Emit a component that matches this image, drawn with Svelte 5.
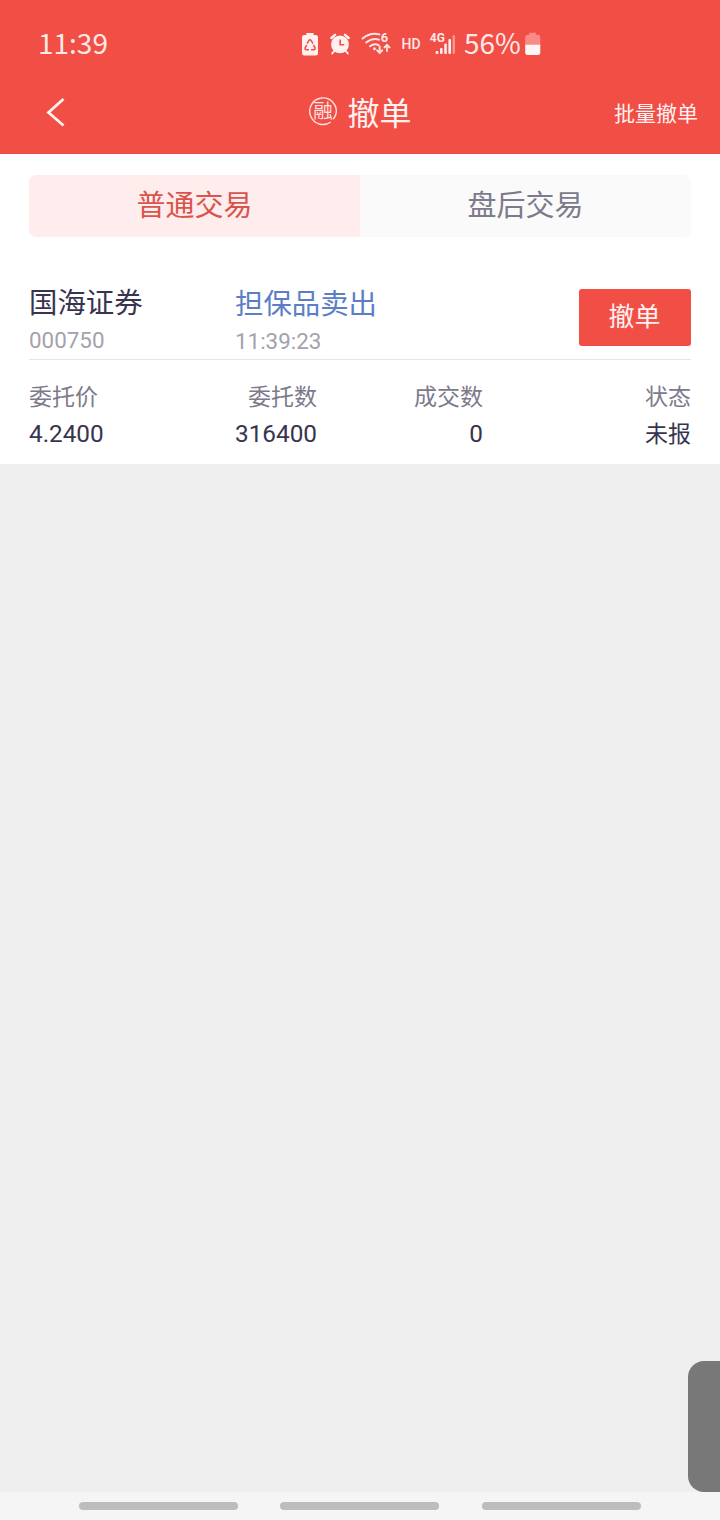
<script>
	const tabs = ['普通交易', '盘后交易'];
	let activeTab = 0;

	const order = {
		name: '国海证券',
		code: '000750',
		side: '担保品卖出',
		time: '11:39:23'
	};

	const fields = [
		{ label: '委托价', value: '4.2400' },
		{ label: '委托数', value: '316400' },
		{ label: '成交数', value: '0' },
		{ label: '状态', value: '未报' }
	];
</script>

<div class="screen">
	<header>
		<div class="status">
			<span class="clock">11:39</span>
			<svg class="status-icons" width="156" height="30" viewBox="300 29 156 30">
				<!-- battery saver -->
				<path d="M306.500 33h7v2h2.300a2.200 2.200 0 0 1 2.200 2.200v16a2.200 2.200 0 0 1-2.200 2.200h-11.600a2.200 2.200 0 0 1-2.200-2.200v-16a2.200 2.200 0 0 1 2.200-2.200h2.300z" fill="#fff1f0" />
				<g fill="none" stroke="#f14e46" stroke-width="1.5" stroke-linejoin="round">
					<path d="M307 43.600l2-3.300q1-1.200 2 0l2 3.300" />
					<path d="M313.400 45l1.600 2.700q.4 1.800-1 2h-3" />
					<path d="M309 49.700h-3q-1.500-.4-.8-2l1.500-2.600" />
				</g>
				<!-- alarm -->
				<g fill="none" stroke="#fff1f0" stroke-linecap="round">
					<circle cx="340" cy="44.400" r="8.900" fill="#fff1f0" stroke="none" />
					<path d="M331.300 38l3.700-3.200M348.700 38l-3.700-3.200" stroke-width="2.4" />
					<path d="M334.200 51l-2 2.500M345.800 51l2 2.500" stroke-width="2" />
					<path d="M340.200 39.500v5.300h4" stroke="#f14e46" stroke-width="1.6" stroke-linecap="butt" />
				</g>
				<!-- wifi 6 -->
				<g fill="none" stroke="#ffe5e3" stroke-width="2" stroke-linecap="round">
					<path d="M362.600 38.600q7.700-6.600 16.800-4.200" />
					<path d="M366.200 42.600q6-5.200 12.800-3" />
					<path d="M370 46.300q4.200-3.400 8.600-1.100" />
					<circle cx="374.400" cy="48.800" r="1.500" fill="#ffe5e3" stroke="none" />
					<path d="M379.700 46.500v6M377.100 50.300l2.600 2.600 2.600-2.600M387 51v-5.800M384.400 47.400l2.600-2.600 2.600 2.600" stroke-width="1.9" />
				</g>
				<text x="380.800" y="42" font-size="13" font-weight="700">6</text>
				<text x="401.600" y="48.700" font-size="14" font-weight="500" textLength="19" lengthAdjust="spacingAndGlyphs">HD</text>
				<text x="429.800" y="41.500" font-size="12" font-weight="700" textLength="15" lengthAdjust="spacingAndGlyphs">4G</text>
				<g fill="#fff1f0">
					<rect x="435.600" y="51" width="2.800" height="3" rx="1" />
					<rect x="440" y="48" width="2.600" height="6" rx="1" />
					<rect x="444.200" y="43.500" width="2.600" height="10.500" rx="1" />
					<rect x="448.400" y="39" width="2.600" height="15" rx="1" />
					<rect x="452.600" y="35" width="2.400" height="19" rx="1" opacity=".45" />
				</g>
			</svg>
			<span class="percent">56%</span>
			<svg class="battery" width="16" height="24" viewBox="0 0 16 24">
				<path d="M4.300.8h6.600v2h2a2.400 2.400 0 0 1 2.400 2.400V13H.2V5.200A2.400 2.400 0 0 1 2.500 2.800h1.800z" fill="#f98b86" />
				<path d="M.2 12.700h15.100v8a2.400 2.400 0 0 1-2.400 2.400H2.600a2.400 2.400 0 0 1-2.400-2.400z" fill="#fff5f4" />
			</svg>
		</div>
		<nav>
			<svg class="back" width="20" height="32" viewBox="0 0 20 32">
				<path d="M17.500 3L2.500 16.500l15 13" />
			</svg>
			<h1>
				<svg width="30" height="30" viewBox="0 0 30 30">
					<path d="M22.800 26A13.300 13.300 0 1 1 28.200 17q-.8 3.700-3 6.300" />
					<text x="15" y="21.600" font-size="19.500" text-anchor="middle">融</text>
				</svg>
				撤单
			</h1>
			<span class="batch">批量撤单</span>
		</nav>
	</header>

	<main>
		<div class="tabs">
			{#each tabs as tab, i}
				<button class:active={activeTab === i} on:click={() => (activeTab = i)}>{tab}</button>
			{/each}
		</div>

		<div class="order">
			<div class="stock">
				<div class="name">{order.name}</div>
				<div class="sub">{order.code}</div>
			</div>
			<div class="deal">
				<div class="name">{order.side}</div>
				<div class="sub">{order.time}</div>
			</div>
			<button class="cancel">撤单</button>
		</div>

		<div class="fields">
			{#each fields as field}
				<div class="field">
					<div class="label">{field.label}</div>
					<div class="value">{field.value}</div>
				</div>
			{/each}
		</div>
	</main>

	<div class="drawer"></div>
	<footer>
		<i></i>
		<i></i>
		<i></i>
	</footer>
</div>

<style>
	.screen {
		position: relative;
		display: flex;
		flex-direction: column;
		width: 720px;
		height: 1520px;
		overflow: hidden;
		background: #efefef;
		font-family: Roboto, 'Noto Sans CJK SC', sans-serif;
	}
	button {
		border: none;
		padding: 0;
		font-family: inherit;
	}
	header {
		height: 154px;
		background: #f14e46;
		color: #fff1f0;
		font-family: 'Noto Sans CJK SC', sans-serif;
	}
	.status {
		display: flex;
		align-items: center;
		height: 58px;
		padding: 30px 0 0 38px;
		box-sizing: border-box;
		font-size: 28px;
		line-height: 30px;
		color: #ffe9e7;
	}
	.clock {
		width: 262px;
		padding-bottom: 4px;
	}
	.status-icons {
		flex: none;
	}
	.status-icons text {
		fill: #ffe9e7;
		font-family: Roboto, sans-serif;
	}
	.percent {
		width: 61px;
		padding: 0 0 4px 8px;
	}
	nav {
		display: grid;
		grid-template-columns: 1fr auto 1fr;
		align-items: center;
		height: 96px;
		padding: 12px 22px 0 46px;
		box-sizing: border-box;
	}
	.back {
		fill: none;
		stroke: #fff1f0;
		stroke-width: 2.8;
	}
	h1 {
		display: flex;
		align-items: center;
		gap: 9px;
		margin: -2px 0 0 -24px;
		font-size: 32px;
		font-weight: 400;
		line-height: 40px;
	}
	h1 path {
		fill: none;
		stroke: #ffe3e1;
		stroke-width: 1.4;
	}
	h1 text {
		fill: #ffe3e1;
	}
	.batch {
		text-align: right;
		font-size: 21px;
	}
	main {
		height: 310px;
		padding: 21px 29px 0;
		box-sizing: border-box;
		background: #fff;
	}
	.tabs {
		display: flex;
		height: 62px;
		border-radius: 7px;
		overflow: hidden;
	}
	.tabs button {
		flex: 1;
		padding-top: 1px;
		background: #fafafa;
		color: #7d7a8c;
		font-size: 29px;
		line-height: 61px;
	}
	.tabs button.active {
		background: #ffecec;
		color: #d9544d;
	}
	.order {
		display: grid;
		grid-template-columns: 206px 1fr 112px;
		height: 123px;
		padding-top: 47px;
		box-sizing: border-box;
		border-bottom: 1px solid #e6e6e6;
	}
	.name {
		padding-top: 2px;
		font-size: 28.4px;
		line-height: 36px;
		color: #38344f;
	}
	.deal {
		padding-top: 1px;
	}
	.deal .name {
		color: #5b7ec6;
	}
	.sub {
		font-size: 22.4px;
		line-height: 36px;
		color: #a4a2ab;
	}
	.cancel {
		height: 57px;
		margin-top: 5px;
		padding: 0 1px 6px 0;
		border-radius: 3px;
		background: #f14e46;
		color: #fff1f0;
		font-size: 26px;
	}
	.fields {
		display: grid;
		grid-template-columns: 123px 165px 166px 208px;
		padding-top: 19px;
		text-align: right;
	}
	.field:first-child {
		text-align: left;
	}
	.label {
		font-size: 23px;
		line-height: 38px;
		color: #7d7a8c;
	}
	.value {
		font-size: 24.3px;
		line-height: 34px;
		color: #38344f;
	}
	.field:last-child .value {
		padding-top: 1px;
		font-size: 23px;
	}
	.drawer {
		position: absolute;
		right: 0;
		bottom: 28px;
		width: 32px;
		height: 131px;
		border-radius: 16px 0 0 16px;
		background: #787878;
	}
	footer {
		display: flex;
		align-items: center;
		gap: 42.4px;
		height: 28px;
		margin-top: auto;
		padding-left: 79px;
		background: #f5f5f5;
	}
	footer i {
		width: 159px;
		height: 8px;
		border-radius: 4px;
		background: #bdbdbd;
	}
</style>
